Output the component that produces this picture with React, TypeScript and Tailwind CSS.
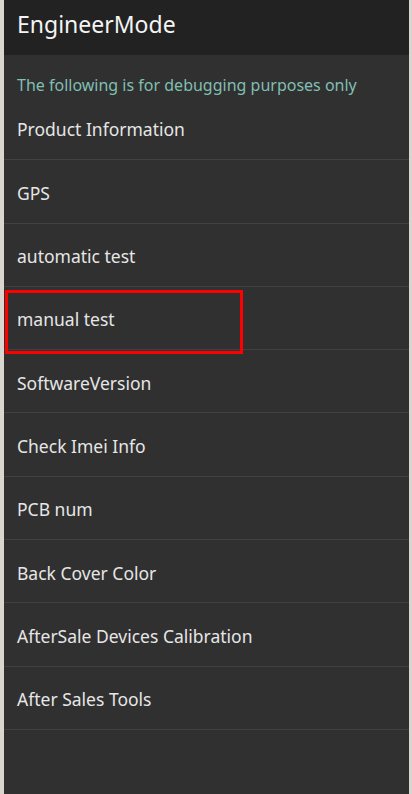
const items = [
  "Product Information",
  "GPS",
  "automatic test",
  "manual test",
  "SoftwareVersion",
  "Check Imei Info",
  "PCB num",
  "Back Cover Color",
  "AfterSale Devices Calibration",
  "After Sales Tools",
];

export default function App() {
  return (
    <div
      className="w-[412px] h-[794px] bg-[#d9d6cf] pl-[4px] pr-[3px] overflow-hidden"
      style={{ fontFamily: '"Noto Sans", "Open Sans", sans-serif' }}
    >
      <div className="h-full bg-[#303030] flex flex-col">
        {/* header */}
        <div className="h-[55px] bg-[#222222] flex items-center pl-[13px]">
          <span className="text-[23px] text-[#f4f4f4] leading-none pb-[6px]">EngineerMode</span>
        </div>

        <div className="pt-[20px] h-[42px] pl-[13px]">
          <p className="text-[16px] leading-[21px] text-[#80bfb2]">
            The following is for debugging purposes only
          </p>
        </div>

        {/* list */}
        <ul>
          {items.map((label, i) => (
            <li
              key={label}
              className="relative h-[63.3px] border-b border-[#414141] flex items-center pl-[13px]"
            >
              <span className={`text-[17.5px] text-[#e6e6e6] ${i === 0 ? "pt-[2px]" : "pt-[3px]"}`}>
                {label}
              </span>
              {label === "manual test" && (
                <div className="absolute left-[1px] top-[3px] w-[238px] h-[64px] border-[3px] border-[#ff0000]" />
              )}
            </li>
          ))}
        </ul>
      </div>
    </div>
  );
}
